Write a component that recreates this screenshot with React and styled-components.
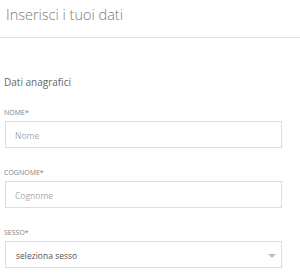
import React from 'react';
import styled, { createGlobalStyle } from 'styled-components';

const GlobalStyle = createGlobalStyle`
  body {
    margin: 0;
    background: #fff;
    font-family: "Open Sans", "Liberation Sans", sans-serif;
  }
`

const Page = styled.div`
  width: 300px;
`

const Header = styled.div`
  padding: 5px 6px 12px;
  border-bottom: 1px solid #e2e2e2;
`

const Title = styled.h1`
  margin: 0;
  font-size: 14.5px;
  line-height: 20px;
  font-weight: 300;
  color: #7a7a7a;
`

const Form = styled.form`
  padding: 37px 18px 0 4px;
`

const SectionTitle = styled.h2`
  margin: 0 0 18px;
  font-size: 10px;
  line-height: 15px;
  font-weight: 400;
  color: #666;
`

const Field = styled.div`
  margin-bottom: 20px;
`

const Label = styled.label`
  display: block;
  margin-bottom: 3px;
  font-size: 7px;
  line-height: 10px;
  color: #808080;
  text-transform: uppercase;
`

const Input = styled.input`
  box-sizing: border-box;
  display: block;
  width: calc(100% - 1px);
  height: 27px;
  margin-left: 1px;
  padding: 2px 9px 0;
  border: 1px solid #ddd;
  outline: none;
  background: #fff;
  font-family: inherit;
  font-size: 8.5px;
  color: #555;

  &::placeholder {
    color: #aaa;
  }
`

const SelectWrap = styled.div`
  position: relative;
  margin-left: 1px;
`

const Select = styled.select`
  box-sizing: border-box;
  display: block;
  width: 100%;
  height: 27px;
  padding: 2px 10px 0;
  border: 1px solid #ddd;
  border-radius: 0;
  outline: none;
  background: #fff;
  appearance: none;
  font-family: inherit;
  font-size: 8.5px;
  color: #555;
`

const Arrow = styled.span`
  position: absolute;
  right: 6px;
  top: 13px;
  width: 0;
  height: 0;
  border-left: 4.5px solid transparent;
  border-right: 4.5px solid transparent;
  border-top: 4px solid #bbb;
  pointer-events: none;
`

export default function App() {
  return (
    <Page>
      <GlobalStyle />
      <Header>
        <Title>Inserisci i tuoi dati</Title>
      </Header>
      <Form>
        <SectionTitle>Dati anagrafici</SectionTitle>
        <Field>
          <Label htmlFor="nome">Nome*</Label>
          <Input id="nome" placeholder="Nome" />
        </Field>
        <Field>
          <Label htmlFor="cognome">Cognome*</Label>
          <Input id="cognome" placeholder="Cognome" />
        </Field>
        <Field>
          <Label htmlFor="sesso">Sesso*</Label>
          <SelectWrap>
            <Select id="sesso" defaultValue="">
              <option value="">seleziona sesso</option>
              <option value="m">maschio</option>
              <option value="f">femmina</option>
            </Select>
            <Arrow />
          </SelectWrap>
        </Field>
      </Form>
    </Page>
  )
}
